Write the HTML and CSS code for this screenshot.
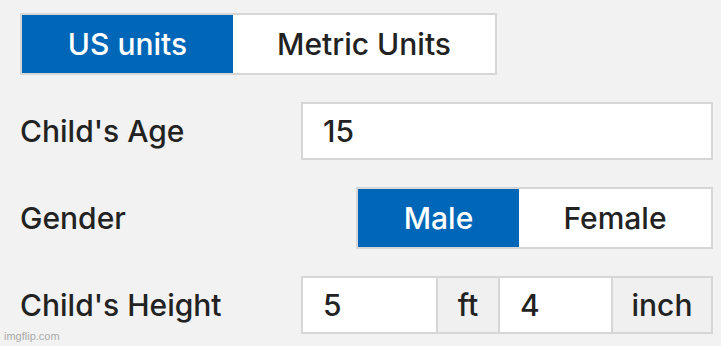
FILE: index.html
```html
<!DOCTYPE html>
<html lang="en">
<head>
    <meta charset="UTF-8">
    <meta name="viewport" content="width=device-width, initial-scale=1.0">
    <title>Child Height Calculator</title>
    <link rel="stylesheet" href="styles.css">
</head>
<body>
    <div class="calculator">
        <!-- Unit switch -->
        <div class="toggle units-toggle">
            <button class="toggle-option active">US units</button>
            <button class="toggle-option">Metric Units</button>
        </div>

        <div class="form-grid">
            <label class="field-label" for="age">Child's Age</label>
            <input class="text-field" type="text" id="age" value="15">

            <span class="field-label">Gender</span>
            <div class="toggle gender-toggle">
                <button class="toggle-option active">Male</button>
                <button class="toggle-option">Female</button>
            </div>

            <span class="field-label">Child's Height</span>
            <div class="height-group">
                <input class="group-input feet" type="text" value="5" aria-label="Feet">
                <span class="group-unit unit-ft">ft</span>
                <input class="group-input inches" type="text" value="4" aria-label="Inches">
                <span class="group-unit unit-inch">inch</span>
            </div>
        </div>
    </div>

    <div class="watermark">imgflip.com</div>
</body>
</html>
```

FILE: styles.css
```css
body {
    font-family: Inter, "Noto Sans", Arial, sans-serif;
    font-weight: 500;
    background-color: #f2f2f2;
    margin: 0;
    padding: 13px 8px 0 20px;
    color: #222;
}

.toggle {
    display: flex;
    height: 62px;
    box-sizing: border-box;
    border: 2px solid #d6d6d6;
    background-color: #fff;
}

.toggle-option {
    font-family: inherit;
    font-weight: inherit;
    font-size: 30px;
    color: #222;
    background: #fff;
    border: none;
    padding: 0;
    margin: 0;
    cursor: pointer;
}

.toggle-option.active {
    background-color: #0067b8;
    color: #fff;
}

.units-toggle {
    width: 477px;
}

.units-toggle .toggle-option:first-child {
    width: 211px;
}

.units-toggle .toggle-option:last-child {
    flex: 1;
}

.form-grid {
    display: grid;
    grid-template-columns: 281px 412px;
    row-gap: 27px;
    align-items: center;
    margin-top: 27px;
}

.field-label {
    font-size: 30px;
    color: #222;
}

.text-field {
    font-family: inherit;
    font-weight: inherit;
    font-size: 30px;
    color: #222;
    height: 58px;
    box-sizing: border-box;
    border: 2px solid #d6d6d6;
    padding: 0 20px;
    background: #fff;
}

/* Gender switch sits at the right edge */
.gender-toggle {
    justify-self: end;
    width: 357px;
}

.gender-toggle .toggle-option:first-child {
    width: 161px;
}

.gender-toggle .toggle-option:last-child {
    flex: 1;
}

.height-group {
    display: flex;
    height: 58px;
    box-sizing: border-box;
    border: 2px solid #d6d6d6;
    background: #fff;
}

.group-input {
    font-family: inherit;
    font-weight: inherit;
    font-size: 30px;
    color: #222;
    border: none;
    padding: 0 20px;
    box-sizing: border-box;
    min-width: 0;
    background: #fff;
}

.group-input.feet {
    width: 133px;
}

.group-input.inches {
    width: 111px;
}

.group-unit {
    display: flex;
    align-items: center;
    justify-content: center;
    box-sizing: border-box;
    font-size: 30px;
    background-color: #f0f0f0;
    border-left: 2px solid #d6d6d6;
    border-right: 2px solid #d6d6d6;
}

.unit-ft {
    width: 64px;
}

.unit-inch {
    flex: 1;
    border-right: none;
}

.watermark {
    position: absolute;
    left: 4px;
    bottom: 4px;
    font-family: "Liberation Sans", Arial, sans-serif;
    font-size: 11px;
    color: #aaa;
}
```
